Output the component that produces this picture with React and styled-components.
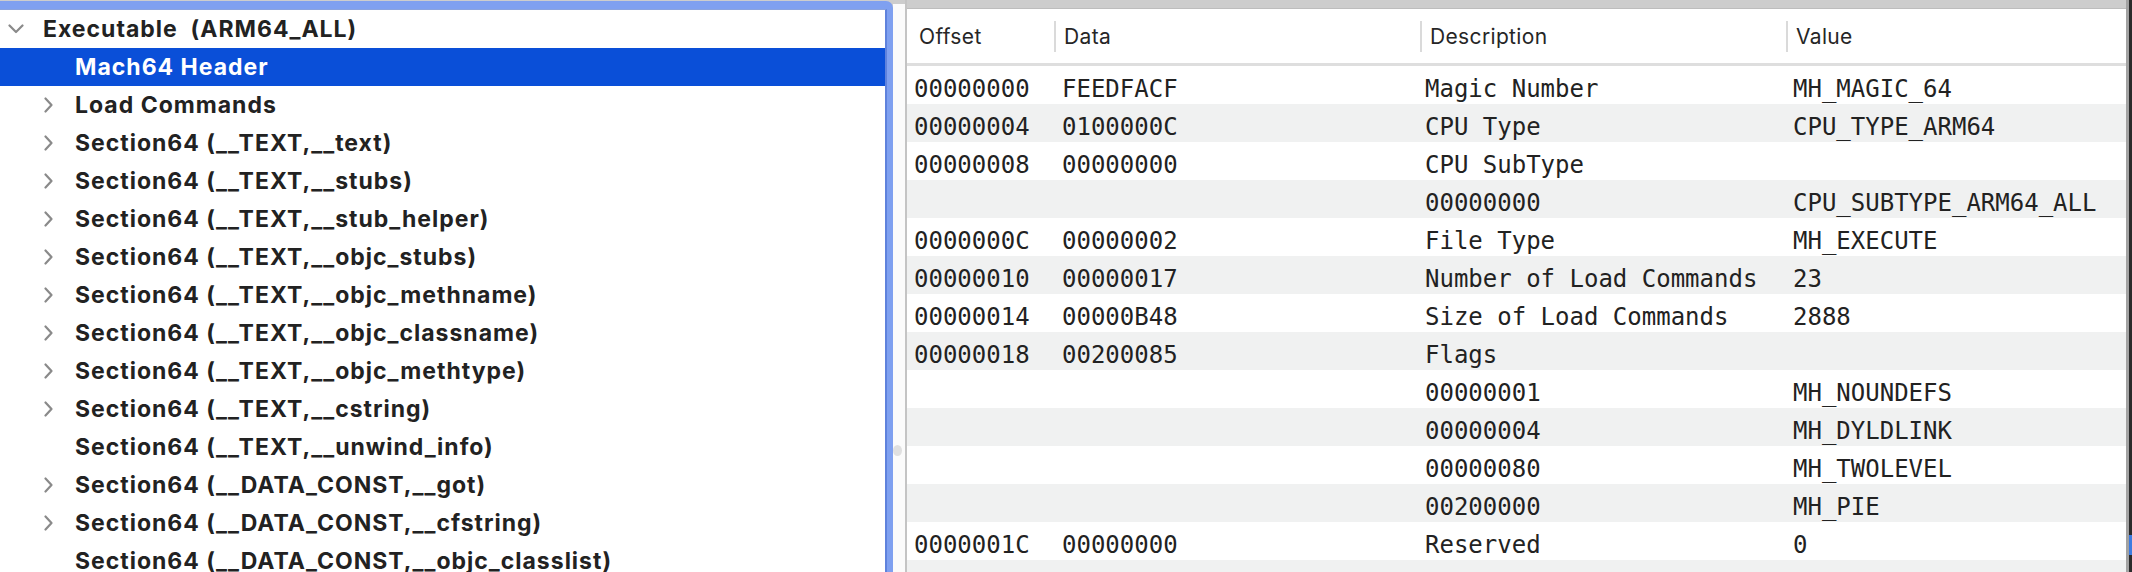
import React from "react";
import styled, { createGlobalStyle } from "styled-components";

const GlobalStyle = createGlobalStyle`
    body {
        margin: 0;
        background: #cdcdcd;
    }
`

const Page = styled.div`
    display: flex;
    width: 2132px;
    height: 572px;
    background: #cdcdcd;
    overflow: hidden;
`

const TreePane = styled.div`
    display: flex;
    flex: none;
    width: 893px;
    padding-top: 1px;
`

const FocusRing = styled.div`
    display: flex;
    flex: 1;
    border-top: 8px solid #7fa0f0;
    border-right: 6px solid #7fa0f0;
    border-top-right-radius: 7px;
`

const TreeList = styled.div`
    flex: 1;
    background: #fff;
    border-top: 1px solid #8aa3df;
    border-right: 2px solid #5f82dc;
    overflow: hidden;
`

const TreeRow = styled.div`
    display: flex;
    align-items: center;
    height: 38px;
    padding-left: ${p => p.level * 32}px;
    background: ${p => (p.selected ? "#0a4fd8" : "transparent")};
    color: ${p => (p.selected ? "#fff" : "#222")};
    font-family: Inter, "Noto Sans", sans-serif;
    font-size: 23px;
    font-weight: 700;
    letter-spacing: 1px;
    white-space: nowrap;
`

const Toggle = styled.div`
    display: flex;
    align-items: center;
    justify-content: center;
    flex: none;
    width: 32px;
    height: 38px;
`

const Label = styled.span`
    margin-left: 11px;
`

const Splitter = styled.div`
    display: flex;
    justify-content: center;
    flex: none;
    width: 12px;
    margin-top: 4px;
    padding-top: 441px;
    padding-right: 3px;
    box-sizing: border-box;
    background: #fbfbfb;
`

const Grip = styled.div`
    width: 11px;
    height: 11px;
    border-radius: 50%;
    background: #e0e0e0;
`

const Divider = styled.div`
    flex: none;
    width: 2px;
    background: #c4c4c4;
`

const TablePane = styled.div`
    display: flex;
    flex-direction: column;
    flex: 1;
    padding-top: 8px;
`

const Table = styled.div`
    flex: 1;
    background: #fff;
    border-top: 1px solid #bdbdbd;
    overflow: hidden;
`

const Columns = `
    display: grid;
    grid-template-columns: 147px 366px 366px 1fr;
`

const HeaderRow = styled.div`
    ${Columns}
    align-items: center;
    height: 54px;
    border-bottom: 3px solid #dedede;
`

const HeaderCell = styled.div`
    display: flex;
    align-items: center;
    height: 31px;
    padding-left: ${p => (p.first ? 12 : 8)}px;
    border-left: ${p => (p.first ? "none" : "2px solid #dadada")};
    font-family: Inter, "Noto Sans", sans-serif;
    font-size: 21px;
    letter-spacing: 0.35px;
    color: #262626;
`

const DataRow = styled.div`
    ${Columns}
    height: 38px;
    background: ${p => (p.striped ? "#f0f1f1" : "#fff")};
`

const pads = [7, 8, 5, 7]

const DataCell = styled.div`
    padding-top: 8px;
    padding-left: ${p => pads[p.col]}px;
    font-family: "DejaVu Sans Mono", "Liberation Mono", monospace;
    font-size: 24px;
    line-height: 30px;
    color: #222;
    white-space: nowrap;
`

const EdgeStrip = styled.div`
    flex: none;
    width: 6px;
    background: linear-gradient(to right, #a2a2a2 0 3px, #2b2b2b 3px);
`

const EdgeMark = styled.div`
    width: 3px;
    height: 20px;
    margin: 535px 0 0 3px;
    background: #3d7be0;
`

const ChevronDown = () => (
    <svg width="16" height="10" viewBox="0 0 16 10">
        <polyline points="1.5,1.5 8,8 14.5,1.5" fill="none" stroke="#8a8a8a" strokeWidth="2.2" strokeLinecap="round" strokeLinejoin="round" />
    </svg>
)

const ChevronRight = () => (
    <svg width="9" height="16" viewBox="0 0 9 16">
        <polyline points="1.5,1.5 7.5,8 1.5,14.5" fill="none" stroke="#8a8a8a" strokeWidth="2.2" strokeLinecap="round" strokeLinejoin="round" />
    </svg>
)

const tree = [
    { level: 0, label: "Executable\u00a0\u00a0(ARM64_ALL)", toggle: "open" },
    { level: 1, label: "Mach64 Header", selected: true },
    { level: 1, label: "Load Commands", toggle: "closed" },
    { level: 1, label: "Section64 (__TEXT,__text)", toggle: "closed" },
    { level: 1, label: "Section64 (__TEXT,__stubs)", toggle: "closed" },
    { level: 1, label: "Section64 (__TEXT,__stub_helper)", toggle: "closed" },
    { level: 1, label: "Section64 (__TEXT,__objc_stubs)", toggle: "closed" },
    { level: 1, label: "Section64 (__TEXT,__objc_methname)", toggle: "closed" },
    { level: 1, label: "Section64 (__TEXT,__objc_classname)", toggle: "closed" },
    { level: 1, label: "Section64 (__TEXT,__objc_methtype)", toggle: "closed" },
    { level: 1, label: "Section64 (__TEXT,__cstring)", toggle: "closed" },
    { level: 1, label: "Section64 (__TEXT,__unwind_info)" },
    { level: 1, label: "Section64 (__DATA_CONST,__got)", toggle: "closed" },
    { level: 1, label: "Section64 (__DATA_CONST,__cfstring)", toggle: "closed" },
    { level: 1, label: "Section64 (__DATA_CONST,__objc_classlist)" },
]

const rows = [
    ["00000000", "FEEDFACF", "Magic Number", "MH_MAGIC_64"],
    ["00000004", "0100000C", "CPU Type", "CPU_TYPE_ARM64"],
    ["00000008", "00000000", "CPU SubType", ""],
    ["", "", "00000000", "CPU_SUBTYPE_ARM64_ALL"],
    ["0000000C", "00000002", "File Type", "MH_EXECUTE"],
    ["00000010", "00000017", "Number of Load Commands", "23"],
    ["00000014", "00000B48", "Size of Load Commands", "2888"],
    ["00000018", "00200085", "Flags", ""],
    ["", "", "00000001", "MH_NOUNDEFS"],
    ["", "", "00000004", "MH_DYLDLINK"],
    ["", "", "00000080", "MH_TWOLEVEL"],
    ["", "", "00200000", "MH_PIE"],
    ["0000001C", "00000000", "Reserved", "0"],
    ["", "", "", ""],
]

const headers = ["Offset", "Data", "Description", "Value"]

const App = () => {
    return (
        <Page>
            <GlobalStyle />
            <TreePane>
                <FocusRing>
                    <TreeList>
                        {tree.map((item, i) => (
                            <TreeRow key={i} level={item.level} selected={item.selected}>
                                <Toggle>
                                    {item.toggle === "open" && <ChevronDown />}
                                    {item.toggle === "closed" && <ChevronRight />}
                                </Toggle>
                                <Label>{item.label}</Label>
                            </TreeRow>
                        ))}
                    </TreeList>
                </FocusRing>
            </TreePane>
            <Splitter>
                <Grip />
            </Splitter>
            <Divider />
            <TablePane>
                <Table>
                    <HeaderRow>
                        {headers.map((h, i) => (
                            <HeaderCell key={h} first={i === 0}>{h}</HeaderCell>
                        ))}
                    </HeaderRow>
                    {rows.map((row, i) => (
                        <DataRow key={i} striped={i % 2 === 1}>
                            {row.map((cell, j) => (
                                <DataCell key={j} col={j}>{cell}</DataCell>
                            ))}
                        </DataRow>
                    ))}
                </Table>
            </TablePane>
            <EdgeStrip>
                <EdgeMark />
            </EdgeStrip>
        </Page>
    )
}

export default App;
